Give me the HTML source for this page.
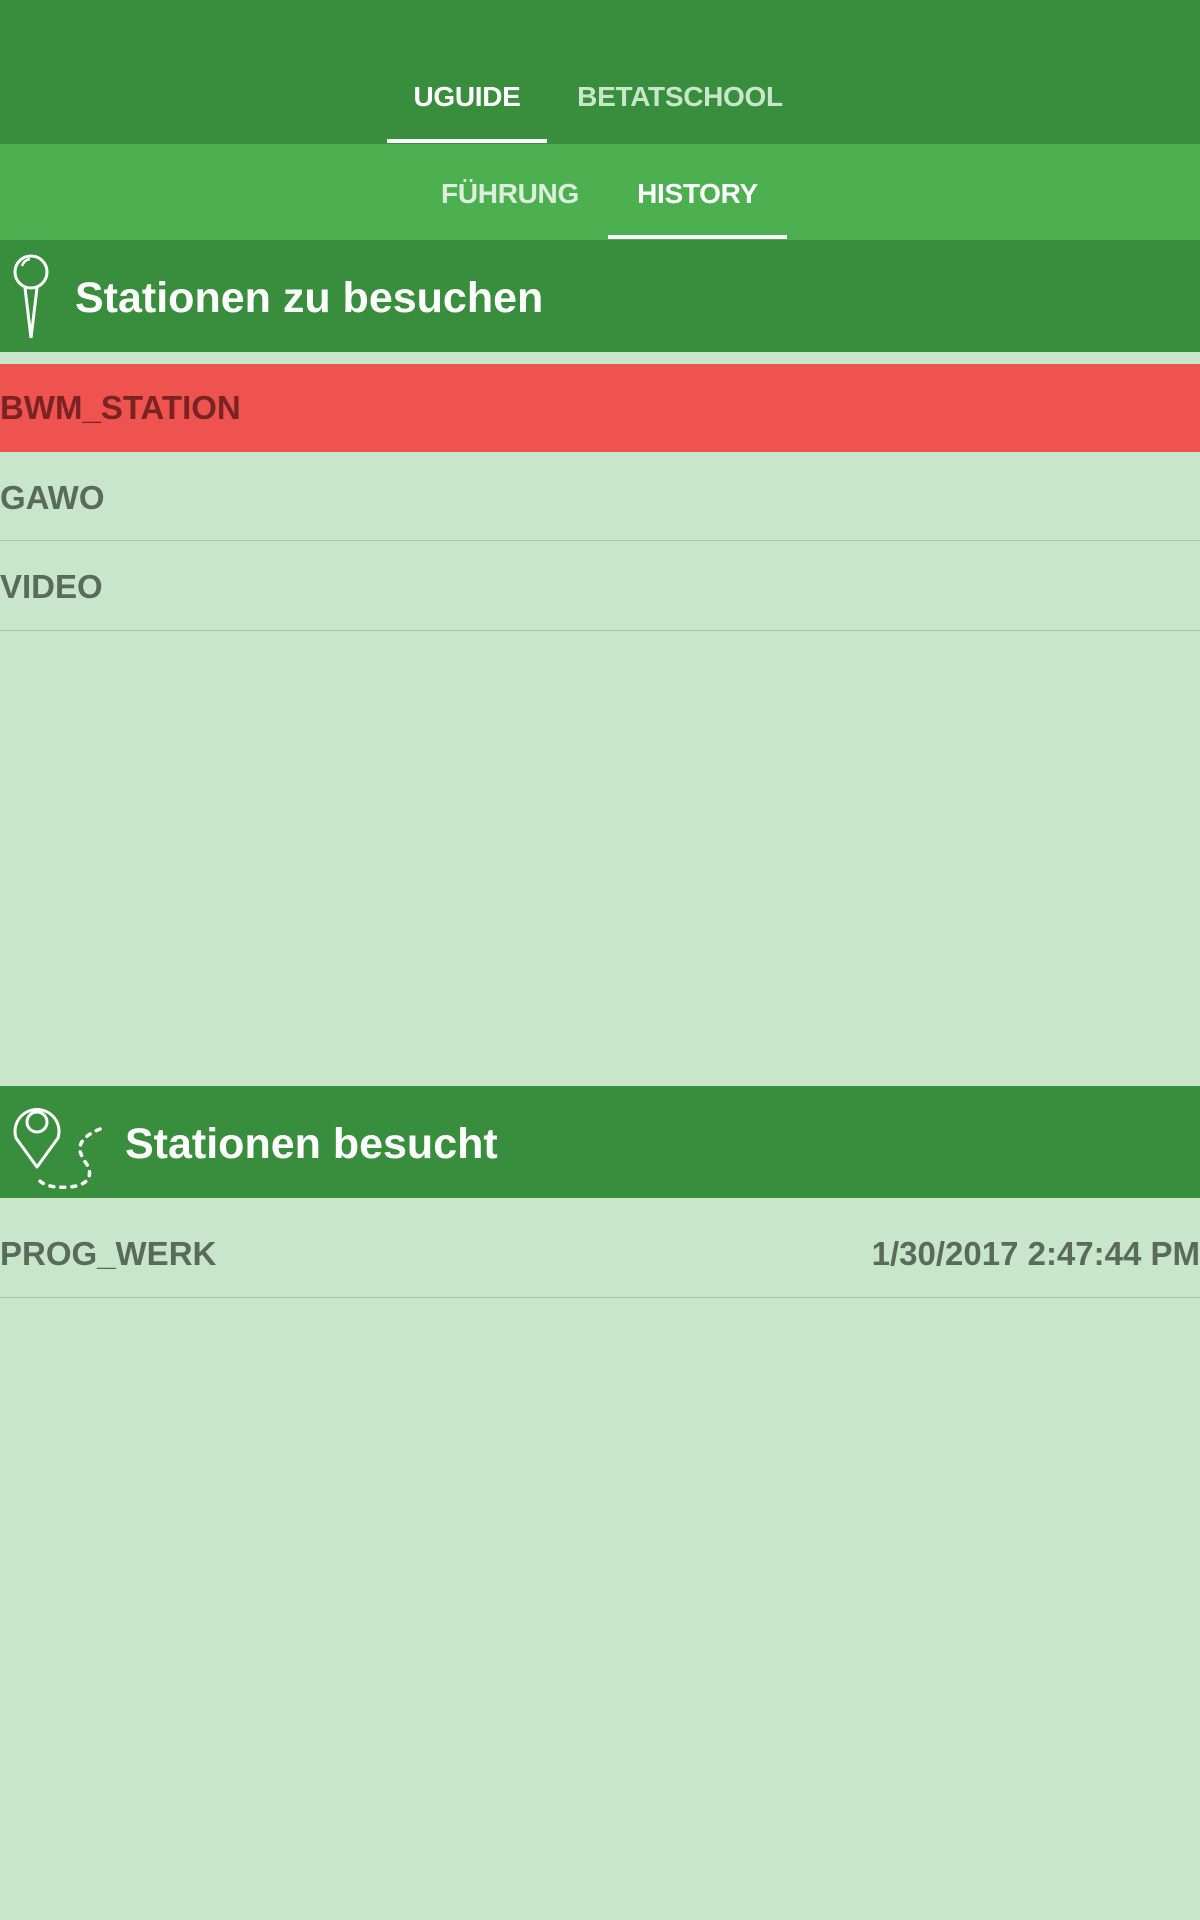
<!DOCTYPE html>
<html><head><meta charset="utf-8"><style>
body{margin:0;width:1200px;height:1920px;background:#c8e6c9;font-family:"Liberation Sans",sans-serif;position:relative;overflow:hidden}
.a{position:absolute;left:0;width:1200px}
.t{position:absolute;font-weight:bold;white-space:nowrap}
.tab{font-size:28px;font-weight:bold;letter-spacing:-0.3px;text-align:center}
.row{position:absolute;left:0;width:1200px;border-bottom:1px solid #a9c6aa;color:#5b6b5b;font-weight:bold;font-size:33px;letter-spacing:0;box-sizing:border-box}
</style></head><body>
<div class="a" style="top:0;height:144px;background:#388e3c"></div>
<div class="t tab" style="left:387px;width:160px;top:81px;color:#fff">UGUIDE</div>
<div style="position:absolute;left:387px;width:160px;top:139px;height:4px;background:#fff"></div>
<div class="t tab" style="left:560px;width:240px;top:81px;color:#c8e6c9">BETATSCHOOL</div>
<div class="a" style="top:144px;height:96px;background:#4caf50"></div>
<div class="t tab" style="left:420px;width:180px;top:178px;color:#dcefdc">FÜHRUNG</div>
<div class="t tab" style="left:608px;width:179px;top:178px;color:#fff">HISTORY</div>
<div style="position:absolute;left:608px;width:179px;top:235px;height:4px;background:#fff"></div>

<div class="a" style="top:240px;height:112px;background:#388e3c"></div>
<svg style="position:absolute;left:0;top:240px" width="60" height="112" viewBox="0 0 60 112">
<circle cx="31" cy="32" r="16" fill="none" stroke="#fff" stroke-width="3"/>
<path d="M22 26 Q24 20 30 19" fill="none" stroke="#fff" stroke-width="2.5"/>
<path d="M25 48 L31 98 L37 48" fill="none" stroke="#fff" stroke-width="3"/>
</svg>
<div class="t" style="left:75px;top:274px;color:#fff;font-size:43px;letter-spacing:0">Stationen zu besuchen</div>

<div class="row" style="top:364px;height:88px;background:#ef5350;color:#7b2323;border:none;padding-top:25px">BWM_STATION</div>
<div class="row" style="top:452px;height:89px;padding-top:27px">GAWO</div>
<div class="row" style="top:541px;height:90px;padding-top:27px">VIDEO</div>

<div class="a" style="top:1086px;height:112px;background:#388e3c"></div>
<svg style="position:absolute;left:0;top:1086px" width="110" height="112" viewBox="0 0 110 112">
<path d="M37 81 L16 52 A22 22 0 1 1 58 52 Z" fill="none" stroke="#fff" stroke-width="3" stroke-linejoin="round"/>
<circle cx="37" cy="36" r="10" fill="none" stroke="#fff" stroke-width="3"/>
<path d="M100 43 Q78 52 80 65 Q82 72 88 80 Q95 98 70 101 Q45 103 37 92" fill="none" stroke="#fff" stroke-width="3.5" stroke-dasharray="4 7" stroke-linecap="round"/>
</svg>
<div class="t" style="left:125px;top:1120px;color:#fff;font-size:43px;letter-spacing:0">Stationen besucht</div>

<div class="row" style="top:1198px;height:100px;padding-top:37px">PROG_WERK<span style="position:absolute;right:0;top:37px">1/30/2017 2:47:44 PM</span></div>
</body></html>
